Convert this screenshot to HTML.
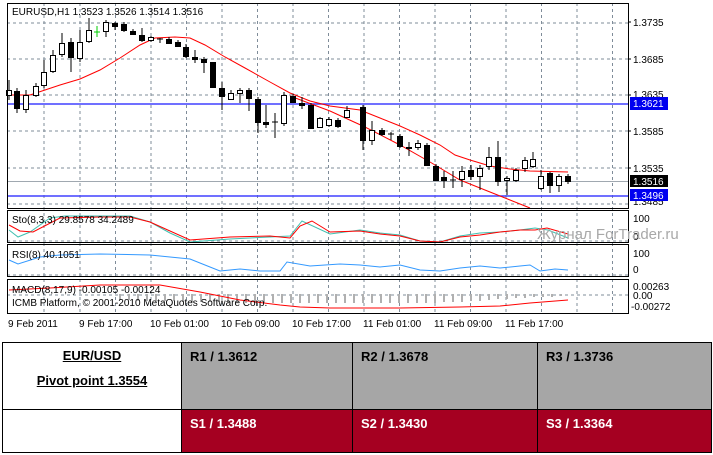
<!DOCTYPE html>
<html><head><meta charset="utf-8"><style>
body{margin:0;width:713px;height:455px;background:#fff;overflow:hidden;font-family:"Liberation Sans",sans-serif}
svg{position:absolute;left:0;top:0}
.t{font-family:"Liberation Sans","DejaVu Sans",sans-serif;font-size:10px;fill:#000}
table{position:absolute;left:2px;top:342px;border-collapse:collapse;width:710px;height:111px}
td{border:1px solid #000;vertical-align:top;font-family:"Liberation Sans",sans-serif;font-weight:bold;font-size:13px;padding:6px 8px}
</style></head><body>
<svg width="713" height="340" viewBox="0 0 713 340">
<g stroke="#7f8c99" stroke-dasharray="3,3" stroke-width="1">
<line x1="44" y1="3" x2="44" y2="313"/><line x1="80" y1="3" x2="80" y2="313"/><line x1="115.5" y1="3" x2="115.5" y2="313"/><line x1="151" y1="3" x2="151" y2="313"/><line x1="186.5" y1="3" x2="186.5" y2="313"/><line x1="222" y1="3" x2="222" y2="313"/><line x1="257.5" y1="3" x2="257.5" y2="313"/><line x1="293" y1="3" x2="293" y2="313"/><line x1="328.5" y1="3" x2="328.5" y2="313"/><line x1="364" y1="3" x2="364" y2="313"/><line x1="399.5" y1="3" x2="399.5" y2="313"/><line x1="435" y1="3" x2="435" y2="313"/><line x1="470.5" y1="3" x2="470.5" y2="313"/><line x1="506" y1="3" x2="506" y2="313"/><line x1="541.5" y1="3" x2="541.5" y2="313"/><line x1="577" y1="3" x2="577" y2="313"/><line x1="612.5" y1="3" x2="612.5" y2="313"/>
<line x1="7" y1="23" x2="628" y2="23"/><line x1="7" y1="59" x2="628" y2="59"/><line x1="7" y1="95" x2="628" y2="95"/><line x1="7" y1="131" x2="628" y2="131"/><line x1="7" y1="168" x2="628" y2="168"/><line x1="7" y1="204" x2="628" y2="204"/>
<line x1="7" y1="295" x2="628" y2="295"/><line x1="7" y1="241" x2="628" y2="241"/><line x1="7" y1="275" x2="628" y2="275"/>
</g>
<line x1="7" y1="104" x2="628" y2="104" stroke="#4040ff" stroke-width="1.5"/>
<line x1="7" y1="196" x2="628" y2="196" stroke="#4040ff" stroke-width="1.5"/>
<line x1="7" y1="181.5" x2="628" y2="181.5" stroke="#a0a8b0"/>
<polyline fill="none" stroke="#f00" stroke-width="1" points="9,95 30,95 45,90 60,85 80,79 100,70 120,58 140,45 155,38 175,37 190,38 205,45 225,57 245,68 270,82 290,93 310,101 330,106 360,110 380,118 400,126 420,135 440,145 455,155 470,160 490,166 510,169 530,171 568,172"/>
<polyline fill="none" stroke="#f00" stroke-width="1" points="290,96 330,111 365,127 400,145 430,162 460,180 490,192 530,208"/>
<g stroke="#000" stroke-width="1" id="c">
<line x1="9" y1="80" x2="9" y2="100"/><rect x="6.5" y="90.5" width="5" height="5" fill="#fff"/>
<line x1="17" y1="88" x2="17" y2="113"/><rect x="14.5" y="91.5" width="5" height="17" fill="#000"/>
<line x1="26" y1="90" x2="26" y2="113"/><rect x="23.5" y="95.5" width="5" height="14" fill="#fff"/>
<line x1="36" y1="83" x2="36" y2="97"/><rect x="33.5" y="86.5" width="5" height="9" fill="#fff"/>
<line x1="44" y1="60" x2="44" y2="88"/><rect x="41.5" y="72.5" width="5" height="13" fill="#fff"/>
<line x1="53" y1="50" x2="53" y2="73"/><rect x="50.5" y="55.5" width="5" height="16" fill="#fff"/>
<line x1="62" y1="33" x2="62" y2="57"/><rect x="59.5" y="43.5" width="5" height="11" fill="#fff"/>
<line x1="71" y1="38" x2="71" y2="72"/><rect x="68.5" y="42.5" width="5" height="15" fill="#000"/>
<line x1="80" y1="30" x2="80" y2="62"/><rect x="77.5" y="42.5" width="5" height="16" fill="#fff"/>
<line x1="89" y1="18" x2="89" y2="43"/><rect x="86.5" y="30.5" width="5" height="11" fill="#fff"/>
<line x1="97" y1="26" x2="97" y2="37" stroke="#0c0"/><line x1="94" y1="32" x2="100" y2="32" stroke="#0c0"/>
<line x1="106" y1="20" x2="106" y2="37"/><rect x="103.5" y="22.5" width="5" height="9" fill="#fff"/>
<line x1="115" y1="22" x2="115" y2="30"/><rect x="112.5" y="23.5" width="5" height="3" fill="#000"/>
<line x1="124" y1="22" x2="124" y2="32"/><rect x="121.5" y="24.5" width="5" height="6" fill="#000"/>
<line x1="133" y1="29" x2="133" y2="35"/><rect x="130.5" y="31.5" width="5" height="3" fill="#000"/>
<line x1="142" y1="28" x2="142" y2="42"/><rect x="139.5" y="35.5" width="5" height="5" fill="#000"/>
<line x1="151" y1="36" x2="151" y2="42"/><rect x="148.5" y="37.5" width="5" height="3" fill="#fff"/>
<line x1="160" y1="38" x2="160" y2="43"/><line x1="157" y1="39" x2="163" y2="39"/>
<line x1="169" y1="37" x2="169" y2="44"/><rect x="166.5" y="39.5" width="5" height="4" fill="#000"/>
<line x1="178" y1="40" x2="178" y2="47"/><rect x="175.5" y="42.5" width="5" height="4" fill="#000"/>
<line x1="186" y1="44" x2="186" y2="58"/><rect x="183.5" y="47.5" width="5" height="9" fill="#000"/>
<line x1="195" y1="50" x2="195" y2="63"/><rect x="192.5" y="57.5" width="5" height="2" fill="#000"/>
<line x1="204" y1="57" x2="204" y2="73"/><rect x="201.5" y="59.5" width="5" height="3" fill="#000"/>
<line x1="213" y1="62" x2="213" y2="87"/><rect x="210.5" y="62.5" width="5" height="25" fill="#000"/>
<line x1="222" y1="82" x2="222" y2="110"/><rect x="219.5" y="88.5" width="5" height="8" fill="#000"/>
<line x1="231" y1="90" x2="231" y2="100"/><rect x="228.5" y="93.5" width="5" height="6" fill="#fff"/>
<line x1="240" y1="88" x2="240" y2="103"/><rect x="237.5" y="90.5" width="5" height="3" fill="#fff"/>
<line x1="249" y1="88" x2="249" y2="111"/><rect x="246.5" y="90.5" width="5" height="8" fill="#000"/>
<line x1="258" y1="97" x2="258" y2="133"/><rect x="255.5" y="99.5" width="5" height="23" fill="#000"/>
<line x1="266" y1="105" x2="266" y2="128"/><rect x="263.5" y="122.5" width="5" height="2" fill="#000"/>
<line x1="275" y1="113" x2="275" y2="138"/><line x1="272" y1="122" x2="278" y2="122"/>
<line x1="284" y1="92" x2="284" y2="126"/><rect x="281.5" y="95.5" width="5" height="28" fill="#fff"/>
<line x1="293" y1="94" x2="293" y2="103"/><rect x="290.5" y="96.5" width="5" height="6" fill="#000"/>
<line x1="302" y1="97" x2="302" y2="109"/><rect x="299.5" y="103.5" width="5" height="2" fill="#000"/>
<line x1="311" y1="103" x2="311" y2="129"/><rect x="308.5" y="105.5" width="5" height="23" fill="#000"/>
<line x1="320" y1="117" x2="320" y2="128"/><rect x="317.5" y="118.5" width="5" height="9" fill="#fff"/>
<line x1="329" y1="117" x2="329" y2="127"/><rect x="326.5" y="119.5" width="5" height="6" fill="#fff"/>
<line x1="338" y1="118" x2="338" y2="128"/><rect x="335.5" y="120.5" width="5" height="6" fill="#000"/>
<line x1="347" y1="106" x2="347" y2="118"/><rect x="344.5" y="110.5" width="5" height="7" fill="#fff"/>
<line x1="363" y1="105" x2="363" y2="150"/><rect x="360.5" y="107.5" width="5" height="33" fill="#000"/>
<line x1="372" y1="121" x2="372" y2="145"/><rect x="369.5" y="130.5" width="5" height="10" fill="#fff"/>
<line x1="382" y1="128" x2="382" y2="136"/><rect x="379.5" y="130.5" width="5" height="4" fill="#000"/>
<line x1="391" y1="132" x2="391" y2="140"/><line x1="388" y1="134" x2="394" y2="134"/>
<line x1="400" y1="134" x2="400" y2="148"/><rect x="397.5" y="136.5" width="5" height="10" fill="#000"/>
<line x1="409" y1="142" x2="409" y2="156"/><rect x="406.5" y="147.5" width="5" height="1" fill="#000"/>
<line x1="418" y1="140" x2="418" y2="150"/><rect x="415.5" y="143.5" width="5" height="4" fill="#fff"/>
<line x1="427" y1="143" x2="427" y2="166"/><rect x="424.5" y="145.5" width="5" height="20" fill="#000"/>
<line x1="436" y1="164" x2="436" y2="181"/><rect x="433.5" y="166.5" width="5" height="14" fill="#000"/>
<line x1="444" y1="171" x2="444" y2="188"/><rect x="441.5" y="177.5" width="5" height="3" fill="#000"/>
<line x1="453" y1="171" x2="453" y2="188"/><line x1="450" y1="180" x2="456" y2="180"/>
<line x1="462" y1="166" x2="462" y2="187"/><rect x="459.5" y="171.5" width="5" height="8" fill="#fff"/>
<line x1="471" y1="165" x2="471" y2="180"/><rect x="468.5" y="170.5" width="5" height="6" fill="#000"/>
<line x1="480" y1="165" x2="480" y2="190"/><rect x="477.5" y="168.5" width="5" height="8" fill="#fff"/>
<line x1="489" y1="147" x2="489" y2="170"/><rect x="486.5" y="157.5" width="5" height="9" fill="#fff"/>
<line x1="498" y1="141" x2="498" y2="186"/><rect x="495.5" y="157.5" width="5" height="24" fill="#000"/>
<line x1="507" y1="176" x2="507" y2="195"/><rect x="504.5" y="178.5" width="5" height="2" fill="#fff"/>
<line x1="516" y1="168" x2="516" y2="182"/><rect x="513.5" y="170.5" width="5" height="10" fill="#fff"/>
<line x1="525" y1="157" x2="525" y2="172"/><rect x="522.5" y="160.5" width="5" height="8" fill="#fff"/>
<line x1="533" y1="152" x2="533" y2="168"/><rect x="530.5" y="159.5" width="5" height="7" fill="#fff"/>
<line x1="541" y1="170" x2="541" y2="190"/><rect x="538.5" y="176.5" width="5" height="12" fill="#fff"/>
<line x1="550" y1="172" x2="550" y2="193"/><rect x="547.5" y="173.5" width="5" height="12" fill="#000"/>
<line x1="559" y1="174" x2="559" y2="192"/><rect x="556.5" y="176.5" width="5" height="9" fill="#fff"/>
<line x1="568" y1="174" x2="568" y2="184"/><rect x="565.5" y="176.5" width="5" height="5" fill="#000"/>
</g>
<!-- Sto -->
<polyline fill="none" stroke="#40c0b0" points="9,230 18,237 30,232 50,218 65,216 100,216 130,216 150,222 170,233 190,242 230,239 270,237 290,236 302,221 330,234 360,230 380,233 400,235 420,241 440,242 460,236 480,233 500,232 520,230 535,228 548,230 568,238"/>
<polyline fill="none" stroke="#f00" points="9,225 20,231 33,232 60,218 100,217 130,217 150,222 190,240 230,237 270,236 290,238 300,226 312,221 330,232 360,231 380,234 400,236 420,241 440,242 460,237 480,235 500,232 520,230 535,230 547,228 568,234"/>
<!-- RSI -->
<polyline fill="none" stroke="#3399ff" points="9,260 18,264 40,257 60,255 100,254 150,255 190,259 210,267 220,271 240,269 260,271 280,271 287,262 310,266 340,264 360,265 380,267 400,265 420,270 440,271 460,268 480,266 500,268 520,266 530,265 540,271 555,269 568,270"/>
<!-- MACD hist -->
<g stroke="#b0b0b0" stroke-width="2">
<path d="M120 294v6M129 294v6M138 294v7M147 294v7M156 294v7M165 294v7M174 294v7M183 294v8M192 294v8M201 294v8M210 294v8M219 294v8M228 294v9M237 294v9M246 294v9M255 294v9M264 294v9M273 294v9M282 294v9M291 294v9M300 294v9M309 294v9M318 294v9M327 294v9M336 294v9M345 294v9M354 294v9M363 294v9M372 294v9M381 294v9M390 294v9M399 294v9M408 294v9M417 294v9M426 294v9M435 294v9M444 294v8M453 294v8M462 294v8M471 294v7M480 294v7M489 294v6M498 294v5M507 294v5M516 294v4M525 294v4M534 294v3M543 294v3M552 294v3M561 294v2"/>
</g>
<polyline fill="none" stroke="#f00" points="9,290 50,288 100,285 160,285 200,292 240,300 280,305 300,307 330,308 400,308 460,307 500,306 530,303 568,300"/>
<!-- frames -->
<g fill="none" stroke="#000" stroke-width="1">
<rect x="7.5" y="3.5" width="621" height="205"/>
<rect x="7.5" y="210.5" width="621" height="32"/>
<rect x="7.5" y="244.5" width="621" height="32"/>
<rect x="7.5" y="279.5" width="621" height="34"/>
</g>
<g stroke="#000"><line x1="628" y1="22" x2="631" y2="22"/><line x1="628" y1="59" x2="631" y2="59"/><line x1="628" y1="95" x2="631" y2="95"/><line x1="628" y1="131" x2="631" y2="131"/><line x1="628" y1="168" x2="631" y2="168"/></g>
<text class="t" x="12" y="15">EURUSD,H1  1.3523 1.3526 1.3514 1.3516</text>
<text class="t" x="633" y="26">1.3735</text>
<text class="t" x="633" y="63">1.3685</text>
<text class="t" x="633" y="98">1.3635</text>
<text class="t" x="633" y="135">1.3585</text>
<text class="t" x="633" y="172">1.3535</text>
<text class="t" x="633" y="205">1.3485</text>
<rect x="630" y="97" width="38" height="13" fill="#0000f0"/><text class="t" x="633" y="107" style="fill:#fff">1.3621</text>
<rect x="630" y="175" width="38" height="12" fill="#000"/><text class="t" x="633" y="185" style="fill:#fff">1.3516</text>
<rect x="630" y="189" width="38" height="12" fill="#0000f0"/><text class="t" x="633" y="199" style="fill:#fff">1.3496</text>
<text class="t" x="633" y="222">100</text><text class="t" x="633" y="240">0</text>
<text class="t" x="633" y="257">100</text><text class="t" x="633" y="273">0</text>
<text class="t" x="633" y="290">0.00263</text><text class="t" x="633" y="299">0.00</text><text class="t" x="631" y="310">-0.00272</text>
<text class="t" x="12" y="223">Sto(8,3,3) 29.8578 34.2489</text>
<text class="t" x="12" y="258">RSI(8) 40.1051</text>
<text class="t" x="12" y="293">MACD(8,17,9) -0.00105 -0.00124</text>
<text class="t" x="12" y="306">ICMB Platform, © 2001-2010 MetaQuotes Software Corp.</text>
<text x="537" y="239" style="font-family:'Liberation Sans',sans-serif;font-size:15px;fill:#a8a8a8">Журнал ForTrader.ru</text>
<text class="t" x="8" y="327">9 Feb 2011</text>
<text class="t" x="79" y="327">9 Feb 17:00</text>
<text class="t" x="150" y="327">10 Feb 01:00</text>
<text class="t" x="221" y="327">10 Feb 09:00</text>
<text class="t" x="292" y="327">10 Feb 17:00</text>
<text class="t" x="363" y="327">11 Feb 01:00</text>
<text class="t" x="434" y="327">11 Feb 09:00</text>
<text class="t" x="505" y="327">11 Feb 17:00</text>
</svg>
<table>
<tr style="height:67px"><td style="width:162px;text-align:center;background:#fff;padding-top:4px"><div style="text-decoration:underline;line-height:18px">EUR/USD</div><div style="text-decoration:underline;margin-top:8px">Pivot point 1.3554</div></td>
<td style="background:#a6a6a6;width:154px">R1 / 1.3612</td><td style="background:#a6a6a6;width:168px">R2 / 1.3678</td><td style="background:#a6a6a6">R3 / 1.3736</td></tr>
<tr><td style="background:#fff"></td><td style="background:#a50021;color:#fff">S1 / 1.3488</td><td style="background:#a50021;color:#fff">S2 / 1.3430</td><td style="background:#a50021;color:#fff">S3 / 1.3364</td></tr>
</table>
</body></html>
